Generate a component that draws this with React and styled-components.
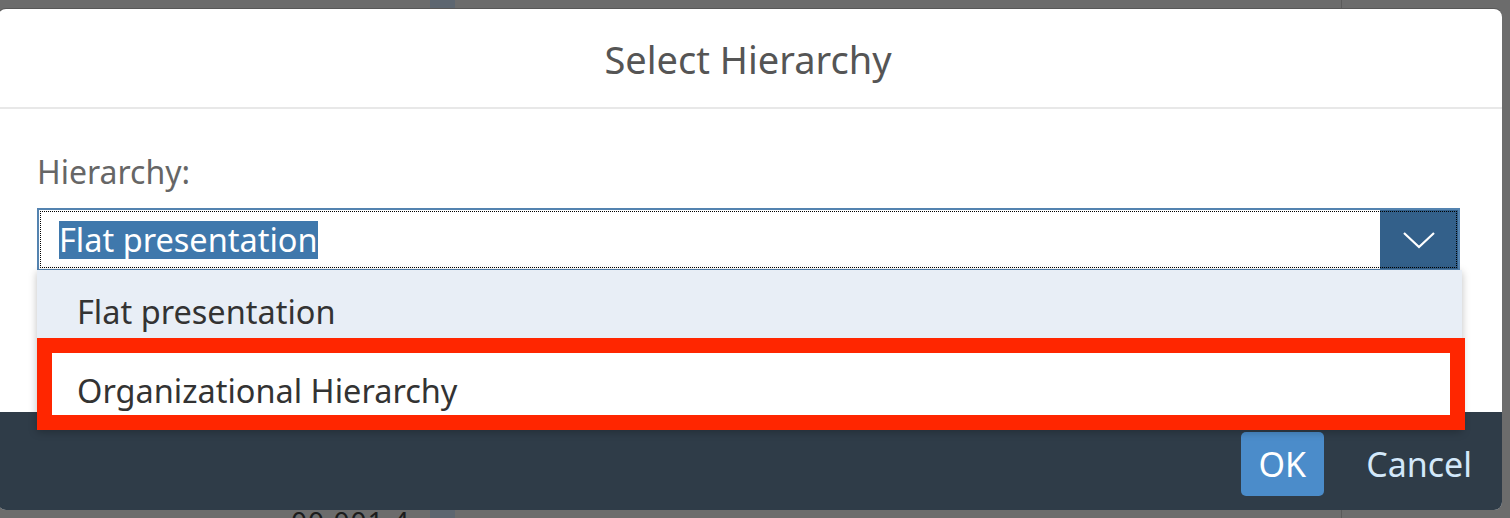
import React from 'react'
import styled, { createGlobalStyle } from 'styled-components'

const Global = createGlobalStyle`
  html, body {
    margin: 0;
    padding: 0;
    background: #6c6c6c;
    font-family: "Noto Sans", "Open Sans", Arial, sans-serif;
  }
`

const Screen = styled.div`
  position: relative;
  width: 1510px;
  height: 518px;
  overflow: hidden;
  background: #6c6c6c;
`

/* the page behind the modal */
const Backdrop = styled.div`
  display: flex;
  height: 100%;
`

const ValueColumn = styled.div`
  width: 430px;
  display: flex;
  flex-direction: column;
  justify-content: flex-end;
  align-items: flex-end;
  padding-right: 20px;
  box-sizing: border-box;
`

const FadedValue = styled.span`
  font-size: 28px;
  color: #1c1c1c;
  margin-bottom: -22px;
  letter-spacing: 1px;
`

const Stripe = styled.div`
  width: 25px;
  background: #5d6670;
`

const RestColumn = styled.div`
  flex: 1;
  display: flex;
`

const Divider = styled.div`
  margin-left: 886px;
  width: 1px;
  background: #5a5a5a;
`

const Dialog = styled.div`
  position: absolute;
  left: -2px;
  top: 9px;
  width: 1504px;
  height: 501px;
  display: flex;
  flex-direction: column;
  background: #fff;
  border-radius: 8px;
  overflow: hidden;
  box-shadow: 0 -1px 0 #585858;
`

const Header = styled.header`
  height: 98px;
  flex: none;
  display: flex;
  align-items: center;
  justify-content: center;
  border-bottom: 2px solid #e8e8e8;
`

const Title = styled.h1`
  margin: 0;
  font-size: 38px;
  font-weight: 400;
  color: #555;
  transform: translate(-2px, 1px);
`

const Body = styled.div`
  position: relative;
  flex: 1;
  padding: 43px 0 0 39px;
`

const Label = styled.label`
  display: block;
  font-size: 32px;
  line-height: 40px;
  color: #666;
  margin-bottom: 16px;
`

const Select = styled.div`
  position: relative;
  width: 1423px;
  height: 63px;
  box-sizing: border-box;
  display: flex;
  border: 2px solid #5483b0;
  background: #fff;

  &::after {
    content: '';
    position: absolute;
    inset: 1px;
    border: 1px dotted #000;
    pointer-events: none;
  }
`

const Value = styled.div`
  flex: 1;
  display: flex;
  align-items: center;
  padding-left: 20px;
`

const Highlight = styled.span`
  font-size: 32.5px;
  line-height: 38px;
  color: #fff;
  background: #3f78ac;
`

const Arrow = styled.div`
  width: 78px;
  background: #33608a;
  display: flex;
  align-items: center;
  justify-content: center;
`

const List = styled.ul`
  position: absolute;
  left: 39px;
  top: 161px;
  z-index: 2;
  width: 1425px;
  margin: 0;
  padding: 0;
  list-style: none;
  background: #fff;
  box-shadow: 0 2px 8px rgba(0, 0, 0, 0.25);
`

const Item = styled.li`
  box-sizing: border-box;
  height: ${p => (p.$marked ? 92 : 70)}px;
  display: flex;
  align-items: center;
  padding: 12px 0 0 ${p => (p.$marked ? 25 : 40)}px;
  font-size: 32.5px;
  color: #333;
  background: ${p => (p.$selected ? '#e8eef6' : '#fff')};
  border: ${p => (p.$marked ? '15px solid #ff2600' : 'none')};
  margin-right: ${p => (p.$marked ? '-3px' : '0')};
  margin-top: ${p => (p.$marked ? '-2px' : '0')};
`

const Footer = styled.footer`
  height: 98px;
  flex: none;
  display: flex;
  align-items: center;
  justify-content: flex-end;
  gap: 28px;
  padding-right: 16px;
  background: #2f3c48;
`

const Button = styled.button`
  height: 64px;
  padding: 0 ${p => (p.$primary ? 18 : 14)}px;
  border: none;
  border-radius: 5px;
  font-family: inherit;
  font-size: 34px;
  color: ${p => (p.$primary ? '#fff' : '#d3e8fa')};
  background: ${p => (p.$primary ? '#4b8cca' : 'transparent')};
  margin-top: 6px;
`

const Chevron = () => (
  <svg width="34" height="20" viewBox="0 0 34 20">
    <path d="M2 3 L17 17 L32 3" fill="none" stroke="#fff" strokeWidth="2.2" />
  </svg>
)

export default function App() {
  return (
    <Screen>
      <Global />
      <Backdrop>
        <ValueColumn>
          <FadedValue>00,001.4</FadedValue>
        </ValueColumn>
        <Stripe />
        <RestColumn>
          <Divider />
        </RestColumn>
      </Backdrop>

      <Dialog>
        <Header>
          <Title>Select Hierarchy</Title>
        </Header>
        <Body>
          <Label>Hierarchy:</Label>
          <Select>
            <Value>
              <Highlight>Flat presentation</Highlight>
            </Value>
            <Arrow>
              <Chevron />
            </Arrow>
          </Select>
          <List>
            <Item $selected>Flat presentation</Item>
            <Item $marked>Organizational Hierarchy</Item>
          </List>
        </Body>
        <Footer>
          <Button $primary>OK</Button>
          <Button>Cancel</Button>
        </Footer>
      </Dialog>
    </Screen>
  )
}
